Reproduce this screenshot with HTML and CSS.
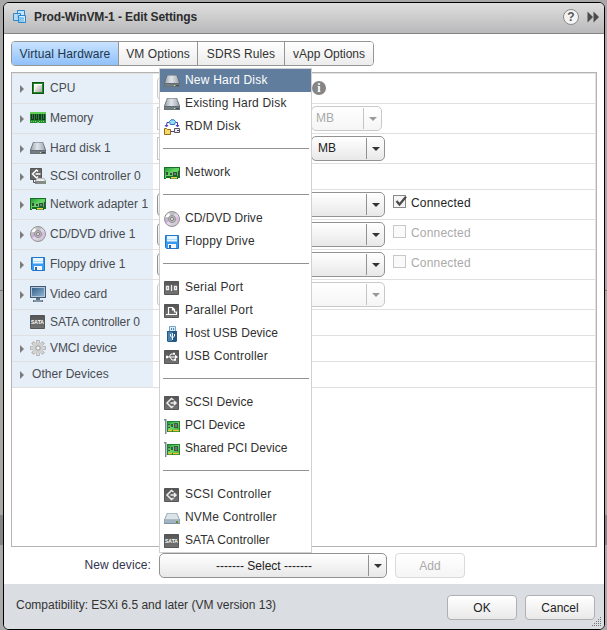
FILE: index.html
```html
<!DOCTYPE html>
<html lang="en">
<head>
<meta charset="utf-8">
<title>Prod-WinVM-1 - Edit Settings</title>
<link rel="stylesheet" href="styles.css">
</head>
<body>
<svg class="defs" width="0" height="0">
  <defs>
    <linearGradient id="gDark" x1="0" y1="0" x2="0" y2="1"><stop offset="0" stop-color="#555"/><stop offset="1" stop-color="#737373"/></linearGradient>
    <linearGradient id="gDisk" x1="0" y1="0" x2="1" y2="0"><stop offset="0" stop-color="#9da7b0"/><stop offset=".45" stop-color="#e1e5e9"/><stop offset="1" stop-color="#a1a9b3"/></linearGradient>
    <linearGradient id="gGreen" x1="0" y1="0" x2="1" y2="1"><stop offset="0" stop-color="#249b38"/><stop offset=".5" stop-color="#6bd866"/><stop offset="1" stop-color="#35a83b"/></linearGradient>
    <linearGradient id="gScreen" x1="0" y1="0" x2="1" y2="1"><stop offset="0" stop-color="#35618e"/><stop offset="1" stop-color="#8eb2ce"/></linearGradient>
    <linearGradient id="gCd" x1="0" y1="0" x2="1" y2="1"><stop offset="0" stop-color="#e4e4e4"/><stop offset=".35" stop-color="#bbb"/><stop offset=".5" stop-color="#e4d8ed"/><stop offset="1" stop-color="#bcbcbc"/></linearGradient>
    <linearGradient id="gChip" x1="0" y1="0" x2="1" y2="1"><stop offset="0" stop-color="#fff"/><stop offset="1" stop-color="#a6a6a6"/></linearGradient>
  </defs>
  <symbol id="vm" viewBox="0 0 14 14"><path d="M4.500.500h7v8h-7z" fill="#c4e5fb" stroke="#2f86cc"/><path d="M.5 3.500h7v7h-7z" fill="#b2dcf7" fill-opacity=".8" stroke="#2f86cc"/><path d="M5.500 5.500h7v7h-7z" fill="#8ccbf5" fill-opacity=".8" stroke="#2f86cc"/><path d="M6.500 6.500h5v5" fill="none" stroke="#d7eefc"/></symbol>
  <symbol id="cpu" viewBox="0 0 16 16"><path d="M2 2h12v12H2z" fill="#174f18"/><path d="M3 3h10v10H3z" fill="#16911e"/><path d="M4 4h8v8H4z" fill="#fff"/><path d="M5 5h7v7H5z" fill="url(#gChip)"/></symbol>
  <symbol id="memory" viewBox="0 0 16 16"><path d="M0 2h16v11H9l-1-1-1 1H0z" fill="#248a31"/><path d="M0 2h16v2H0z" fill="#5bd052"/><path d="M1 4h3v6H1zm4 0h3v6H5zm4 0h2v6H9zm3 0h3v6h-3z" fill="#123d20"/><path d="M2 4h1v5H2zm4 0h1v5H6zm7 0h1v5h-1z" fill="#4c6655"/><path d="M1 11.500h6m2 0h6" stroke="#79d666" stroke-dasharray="1 1"/></symbol>
  <symbol id="disk" viewBox="0 0 16 16"><path d="M3 2h10l3 8v4H0v-4z" fill="#626b73"/><path d="M3.500 2.500h9L15 10H1z" fill="url(#gDisk)"/><path d="M.5 11h15v2.500H.5z" fill="#757d84"/><path d="M10 12h1v1h-1z" fill="#baff72"/><path d="M12 12h3v1h-3z" fill="#424a50"/></symbol>
  <symbol id="nvme" viewBox="0 0 16 16"><path d="M3 3h10l3 7v4H0v-4z" fill="#7d94a7"/><path d="M3.500 3.500h9L15 9.500H1z" fill="#dce3e8"/><path d="M.5 10h15v3H.5z" fill="#a2b3c1"/><path d="M12 11h2v2h-2z" fill="#6a8e24"/></symbol>
  <symbol id="scsi" viewBox="0 0 16 16"><path d="M.5 1.500h14v13H.5z" fill="url(#gDark)" stroke="#555"/><path d="M9.500 5 7.500 3.500 3 8l4.500 4.500L9.500 11M6.500 8h6M10 6l2 2-2 2" fill="none" stroke="#eee" stroke-width="1.500"/></symbol>
  <symbol id="scsi2" viewBox="0 0 16 16"><path d="M.5.500h11v11H.5z" fill="#666" stroke="#555"/><path d="M8 3.500 6.500 2 2.500 6l4 4L8 8.500M5.500 6h5" fill="none" stroke="#fff" stroke-width="1.500"/><path d="M7 10h7l2 3v3H5v-3z" fill="#85898b"/><path d="M7 10.500h7l1 2.500H6z" fill="#ececec"/><path d="M13 14h2v1h-2z" fill="#62ba3a"/><path d="M3.500 12v2.500h2" fill="none" stroke="#555"/></symbol>
  <symbol id="net" viewBox="0 0 16 16"><path d="M0 2h16v11h-2v1H6v-1H2v1H0z" fill="#176f27"/><path d="M1 3h14v8H2v2H1z" fill="url(#gGreen)"/><path d="M2 7h2v3H2zm4 1h2v2H6zm3-1h4v4H9zm5-1h1v5h-1z" fill="#354e40"/><path d="M10 8h2v2h-2z" fill="#6c8476"/><path d="M7 12h6v1.500H7z" fill="#f2d14c"/></symbol>
  <symbol id="cd" viewBox="0 0 16 16"><circle cx="8" cy="8" r="7.500" fill="url(#gCd)" stroke="#969294"/><path d="M1.500 6A7 7 0 0 1 5 2l2 4z" fill="#fff"/><path d="m1 8 5-1v2l-4 3z" fill="#cba7e2" opacity=".75"/><path d="m14.500 6-5 1v2l5 2z" fill="#dfb3df" opacity=".8"/><circle cx="8" cy="8" r="3.500" fill="#bbb" stroke="#929197"/><circle cx="8" cy="8" r="1.500" fill="#fff" stroke="#777"/></symbol>
  <symbol id="floppy" viewBox="0 0 16 16"><path d="M1.500 1.500h13v13h-12l-1-1z" fill="#3a9bf3" stroke="#2374c4"/><path d="M3 2h10v5.500H3z" fill="#eaf6ff"/><path d="M3 5.500h10" stroke="#b6dcf6"/><path d="M4 10h8v4H4z" fill="#f4f6f7"/><path d="M5 11h2v3H5z" fill="#286eaf"/></symbol>
  <symbol id="video" viewBox="0 0 16 16"><path d="M0 0h16v12H0z" fill="#405b78"/><path d="M1 1h14v10H1z" fill="#b3c7d9"/><path d="M2 2h12v8H2z" fill="url(#gScreen)"/><path d="M6 12h4v2h3v2H3v-2h3z" fill="#5c7489"/><path d="M4 15h8" stroke="#a7b8c6"/></symbol>
  <symbol id="gear" viewBox="0 0 16 16"><g stroke="#aaa" stroke-width="3.400"><path d="M8 0v16M0 8h16M2.400 2.400l11.200 11.200M13.600 2.400 2.400 13.600"/></g><g stroke="#d9d9d9" stroke-width="2"><path d="M8 .8v14.400M.8 8h14.400M3 3l10 10M13 3 3 13"/></g><circle cx="8" cy="8" r="5.300" fill="#d0d0d0"/><circle cx="8" cy="8" r="2.200" fill="#edf2f7" stroke="#999"/></symbol>
  <symbol id="rdm" viewBox="0 0 16 16"><path d="M5.500 2.500 7 .8h3l1.500 1.700-.8 3H6.300z" fill="#9bdcf8" stroke="#257bbd"/><path d="M5 3.500H3L2.500 7M1 6l1.500 2L4 6M12 3.500h1.500V7M12 6l1.500 2L15 6" fill="none" stroke="#4634bb"/><path d="M.5 9.500h2l1 1h3v5h-6z" fill="#f5d76a" stroke="#936b16"/><path d="M10.500 9.500h5v4h-5z" fill="#eee" stroke="#555"/><path d="M7 12.500h3M13 11.500h2" stroke="#4a37af"/></symbol>
  <symbol id="serial" viewBox="0 0 16 16"><path d="M.5 1.500h14v13H.5z" fill="url(#gDark)" stroke="#555"/><path d="M2.500 6.500h2v3h-2zM10.500 6.500h2v3h-2zM7.500 5v6" fill="none" stroke="#eee" stroke-width="1.300"/></symbol>
  <symbol id="parallel" viewBox="0 0 16 16"><path d="M.5 1.500h14v13H.5z" fill="url(#gDark)" stroke="#555"/><path d="M2 11.500h11M4.500 11V4.500h4l2 2V9h2v2M8.500 5v2h2" fill="none" stroke="#fff" stroke-width="1.200"/></symbol>
  <symbol id="usbdev" viewBox="0 0 16 16"><path d="M5.500.500h6v5h-6z" fill="#dceaf4" stroke="#76a5c7"/><path d="M7 2h1v2H7zm2 0h1v2H9z" fill="#458bbd"/><path d="M3 5h10v10l-1 1H4l-1-1z" fill="#245986"/><path d="M4 6h4v9H4z" fill="#4f83ad"/><path d="M8.500 7v7M6.500 8v2l2 2 2-2V8" fill="none" stroke="#eaf5fc"/></symbol>
  <symbol id="usb" viewBox="0 0 16 16"><path d="M.5 1.500h14v13H.5z" fill="url(#gDark)" stroke="#555"/><path d="M2 8h10M5 8l2-3h2M6 8l2 3h2" fill="none" stroke="#fff"/><path d="M2 6.800h2v2.400H2zm7-3h2v2H9zm1 6h2v2h-2zm1-4L14 8l-3 2z" fill="#fff"/></symbol>
  <symbol id="pci" viewBox="0 0 16 16"><path d="M0 1h2.500v15H1V2.500H0z" fill="#788998"/><path d="M3 3h13v11H3z" fill="#218332"/><path d="M4 4h11v8H4z" fill="url(#gGreen)"/><path d="M4 6h2v1H4zm0 3h2v1H4zm3-3h2v3H7zm3-1h4v5h-4z" fill="#3d5948"/><path d="M11 6h2v3h-2z" fill="#668070"/><path d="M4 12.500h4m1 0h6" stroke="#efc52c" stroke-width="1.500"/></symbol>
</svg>

<main class="dialog">
  <header class="titlebar">
    <svg class="vm-icon"><use href="#vm"/></svg>
    <h1>Prod-WinVM-1 - Edit Settings</h1>
    <span class="help">?</span>
    <svg class="forward" width="12" height="12" viewBox="0 0 12 12"><path d="M.5.500 6 6 .5 11.500zM6.500.500 12 6l-5.500 5.500z"/></svg>
  </header>

  <nav class="tabs">
    <span class="tab active t1">Virtual Hardware</span><span class="tab t2">VM Options</span><span class="tab t3">SDRS Rules</span><span class="tab t4">vApp Options</span>
  </nav>

  <section class="panel">
    <div class="row"><div class="label"><i class="tri"></i><svg class="icon"><use href="#cpu"/></svg><span>CPU</span></div><div class="control"><span class="combo short faded"></span><span class="info">i</span></div></div>
    <div class="row"><div class="label"><i class="tri"></i><svg class="icon"><use href="#memory"/></svg><span>Memory</span></div><div class="control"><span class="field"></span><span class="combo unit disabled mem"><b>MB</b><i></i></span></div></div>
    <div class="row"><div class="label"><i class="tri"></i><svg class="icon"><use href="#disk"/></svg><span>Hard disk 1</span></div><div class="control"><span class="field"></span><span class="combo unit"><b>MB</b><i></i></span></div></div>
    <div class="row low"><div class="label"><i class="tri"></i><svg class="icon"><use href="#scsi2"/></svg><span>SCSI controller 0</span></div></div>
    <div class="row"><div class="label"><i class="tri"></i><svg class="icon"><use href="#net"/></svg><span>Network adapter 1</span></div><div class="control"><span class="combo wide"><b></b><i></i></span><span class="check"><svg width="14" height="14" viewBox="0 0 14 14"><path d="M2.500 5 5.500 8.500 12 .8" fill="none" stroke="#4a4a4a" stroke-width="2.300"/></svg></span><span class="connected">Connected</span></div></div>
    <div class="row"><div class="label"><i class="tri"></i><svg class="icon"><use href="#cd"/></svg><span>CD/DVD drive 1</span></div><div class="control"><span class="combo wide"><b></b><i></i></span><span class="check off"></span><span class="connected off">Connected</span></div></div>
    <div class="row"><div class="label"><i class="tri"></i><svg class="icon"><use href="#floppy"/></svg><span>Floppy drive 1</span></div><div class="control"><span class="combo wide"><b></b><i></i></span><span class="check off"></span><span class="connected off">Connected</span></div></div>
    <div class="row"><div class="label"><i class="tri"></i><svg class="icon"><use href="#video"/></svg><span>Video card</span></div><div class="control"><span class="combo wide disabled"><b></b><i></i></span></div></div>
    <div class="row low"><div class="label"><i class="tri none"></i><svg class="icon" viewBox="0 0 16 16"><path d="M.5 1.500h14v13H.5z" fill="url(#gDark)" stroke="#555"/><text class="sata-text" x="1" y="10.300" textLength="13" lengthAdjust="spacingAndGlyphs">SATA</text></svg><span class="tight">SATA controller 0</span></div></div>
    <div class="row low"><div class="label"><i class="tri"></i><svg class="icon"><use href="#gear"/></svg><span class="tight">VMCI device</span></div></div>
    <div class="row low"><div class="label"><i class="tri"></i><span class="other">Other Devices</span></div></div>
  </section>

  <div class="new-device">
    <span class="device-label">New device:</span>
    <span class="combo device"><b><span>-------</span> Select <span>-------</span></b><i></i></span>
    <span class="button add">Add</span>
    <ul class="menu">
      <li class="selected"><svg class="icon"><use href="#disk"/></svg><span>New Hard Disk</span></li>
      <li><svg class="icon"><use href="#disk"/></svg><span>Existing Hard Disk</span></li>
      <li><svg class="icon"><use href="#rdm"/></svg><span>RDM Disk</span></li>
      <li class="sep"></li>
      <li><svg class="icon"><use href="#net"/></svg><span>Network</span></li>
      <li class="sep"></li>
      <li><svg class="icon"><use href="#cd"/></svg><span class="tight">CD/DVD Drive</span></li>
      <li><svg class="icon"><use href="#floppy"/></svg><span>Floppy Drive</span></li>
      <li class="sep"></li>
      <li><svg class="icon"><use href="#serial"/></svg><span>Serial Port</span></li>
      <li><svg class="icon"><use href="#parallel"/></svg><span>Parallel Port</span></li>
      <li><svg class="icon"><use href="#usbdev"/></svg><span class="tight">Host USB Device</span></li>
      <li><svg class="icon"><use href="#usb"/></svg><span>USB Controller</span></li>
      <li class="sep"></li>
      <li><svg class="icon"><use href="#scsi"/></svg><span class="tight">SCSI Device</span></li>
      <li><svg class="icon"><use href="#pci"/></svg><span class="tight">PCI Device</span></li>
      <li><svg class="icon"><use href="#pci"/></svg><span class="tight">Shared PCI Device</span></li>
      <li class="sep"></li>
      <li><svg class="icon"><use href="#scsi"/></svg><span>SCSI Controller</span></li>
      <li><svg class="icon"><use href="#nvme"/></svg><span>NVMe Controller</span></li>
      <li><svg class="icon" viewBox="0 0 16 16"><path d="M.5 1.500h14v13H.5z" fill="url(#gDark)" stroke="#555"/><text class="sata-text" x="1" y="10.300" textLength="13" lengthAdjust="spacingAndGlyphs">SATA</text></svg><span class="tight">SATA Controller</span></li>
    </ul>
  </div>

  <footer class="footer">
    <span class="compat">Compatibility: ESXi 6.5 and later (VM version 13)</span>
    <span class="button">OK</span>
    <span class="button">Cancel</span>
    <svg class="grip" width="10" height="10" viewBox="0 0 10 10"><path d="M8.500 0v10M6.500 2v8M4.500 4v6M2.500 6v4M.5 8v2" fill="none" stroke="#777" stroke-dasharray="1 1"/></svg>
  </footer>
</main>
</body>
</html>
```
FILE: styles.css
```css
* { box-sizing: border-box; }
body {
  margin: 0;
  width: 607px;
  height: 630px;
  padding: 2px 2px 0 3px;
  overflow: hidden;
  background: linear-gradient(#a8a8a8 0 290px, #777 290px 291px, #aaa8a5 291px 515px, #858585 515px 545px, #aaa 545px);
  font: 12px "Liberation Sans", Arial, sans-serif;
  color: #333;
}
.defs { position: absolute; }
.dialog {
  width: 602px;
  height: 628px;
  border: 1px solid #000;
  border-radius: 6px;
  background: #fff;
  overflow: hidden;
  display: flex;
  flex-direction: column;
}
.titlebar {
  height: 31px;
  flex: none;
  display: flex;
  align-items: center;
  padding: 0 5px 2px 9px;
  background: linear-gradient(#dedede, #b9b9bb);
  border-bottom: 1px solid #858383;
}
.vm-icon { width: 14px; height: 14px; margin-right: 7px; }
h1 { margin: 0; font-size: 12px; font-weight: bold; flex: 1; color: #2c2c2c; letter-spacing: -.1px; }
.help {
  width: 16px; height: 16px; border-radius: 50%;
  border: 1px solid #8a8a8a; background: #f4f4f4;
  font-weight: bold; font-size: 12px; line-height: 14px; text-align: center; color: #555;
  margin-right: 8px;
}
.forward { fill: #4b4b4b; }
.tabs { display: flex; flex: none; height: 25px; margin: 7px 0 6px 7px; width: 363px; border: 1px solid #959595; border-radius: 4px; overflow: hidden; }
.tab { height: 23px; line-height: 24px; text-align: center; background: linear-gradient(#fff, #ececec); border-right: 1px solid #959595; white-space: nowrap; letter-spacing: .1px; }
.tab.active { background: linear-gradient(#c9e3ff, #90c1f9); color: #20364c; }
.t1 { width: 107px; } .t2 { width: 79px; } .t3 { width: 87px; } .t4 { flex: 1; border: 0; letter-spacing: 0; }

.panel { flex: none; margin-left: 7px; width: 586px; height: 475px; border: 1px solid #b4b2b2; box-shadow: inset -1px 1px #e2e2e2; padding: 1px 1px 0 0; }
.row { height: 30px; display: flex; border-bottom: 1px solid #e0e0e0; }
.low { height: 26px; }
.label { width: 141px; background: #e6eef8; display: flex; align-items: center; padding: 0 0 2px 8px; color: #484c50; white-space: nowrap; }
.label > span { margin-left: 4px; }
.label > span.tight { letter-spacing: -.1px; }
.label > span.other { margin-left: 2px; letter-spacing: .05px; }
.tri { width: 0; height: 0; border-left: 4px solid #7c7c7c; border-top: 4px solid transparent; border-bottom: 4px solid transparent; margin: 2px 6px 0 0; }
.tri.none { border-left-color: transparent; }
.icon { width: 16px; height: 16px; flex: none; }
.sata-text { font: bold 6px "Liberation Sans", sans-serif; fill: #fff; }
.control { display: flex; align-items: center; padding-left: 4px; }
.combo { display: flex; height: 25px; border: 1px solid #929292; border-radius: 5px; background: linear-gradient(#fff, #e8e8e8); color: #222; }
.combo b { flex: 1; font-weight: normal; line-height: 23px; padding-left: 6px; }
.combo i { width: 18px; height: 21px; margin-top: 1px; border-left: 1px solid #929292; display: flex; align-items: center; justify-content: center; }
.combo i::before { content: ""; border-top: 4px solid #333; border-left: 4px solid transparent; border-right: 4px solid transparent; }
.unit { width: 74px; }
.mem { width: 71px; }
.mem b { padding-left: 4px; }
.wide { width: 228px; }
.short { width: 140px; }
.faded, .disabled { border-color: #c9c9c9; background: linear-gradient(#fff, #f5f5f5); color: #aaa; }
.disabled i { border-color: #c5c5c5; }
.disabled i::before { border-top-color: #999; }
.field { width: 154px; height: 23px; border: 1px solid #c5c5c5; }
.info { width: 14px; height: 14px; border-radius: 50%; background: #858585; color: #fff; text-align: center; font: bold 12px/14px "Liberation Serif", serif; margin: -1px 0 0 15px; }
.check { width: 13px; height: 13px; border: 1px solid #888; background: #f5f5f5; margin: -6px 5px 0 8px; }
.check svg { display: block; overflow: visible; }
.check.off { border-color: #c8c8c8; background: #fafafa; }
.connected { letter-spacing: .2px; margin-top: -4px; color: #222; }
.connected.off { color: #aaa; }

.new-device { position: relative; flex: none; height: 37px; display: flex; padding-top: 6px; }
.device-label { width: 147px; margin-right: 8px; text-align: right; line-height: 24px; letter-spacing: .1px; color: #33334d; }
.device { width: 228px; }
.device b { text-align: center; padding: 0; white-space: pre; line-height: 24px; }
.button { width: 70px; height: 25px; border: 1px solid #b0b0b0; border-radius: 4px; background: linear-gradient(#fff, #e9e9e9); text-align: center; line-height: 24px; color: #222; }
.add { margin-left: 8px; color: #aaa; border-color: #dadada; background: linear-gradient(#fff, #f5f5f5); }
.menu { position: absolute; left: 155px; bottom: 31px; width: 153px; height: 485px; margin: 0; padding: 0; border: 1px solid #d0d0d0; background: #fff; list-style: none; color: #303030; }
.menu li { height: 23px; display: flex; align-items: center; padding-left: 4px; white-space: nowrap; }
.menu li span { margin: -2px 0 0 5px; letter-spacing: .2px; }
.menu li .tight { letter-spacing: .02px; }
.menu .selected { background: #617d9d; color: #fff; }
.menu .sep { padding: 0 2px 0 3px; }
.menu .sep::before { content: ""; flex: 1; height: 1px; background: #929292; margin-top: -2px; }
.footer { position: relative; flex: 1; display: flex; align-items: flex-start; padding: 11px 9px 0 12px; background: #dadde2; gap: 8px; }
.compat { flex: 1; line-height: 20px; color: #333; }
.grip { position: absolute; right: 2px; bottom: 2px; }
```
